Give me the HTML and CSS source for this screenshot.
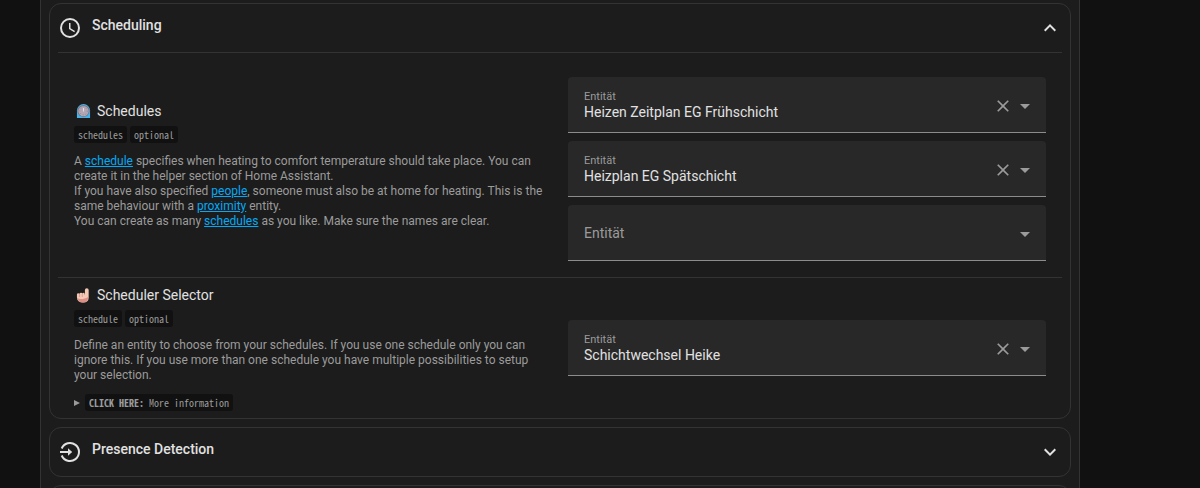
FILE: index.html
```html
<!DOCTYPE html>
<html lang="de">
<head>
  <meta charset="utf-8">
  <title>Blueprint</title>
  <meta name="viewport" content="width=device-width, initial-scale=1.0">
  <link rel="stylesheet" href="styles.css">
</head>
<body>
  <main class="page">

    <!-- Scheduling -->
    <section class="panel">
      <button class="panel-header" type="button" aria-expanded="true">
        <svg class="icon" viewBox="0 0 24 24"><path d="M12 20a8 8 0 1 0 0-16 8 8 0 0 0 0 16m0-18a10 10 0 1 1 0 20 10 10 0 0 1 0-20m.5 5v5.25l4.5 2.67-.75 1.23L11 13V7z"/></svg>
        <span class="panel-title">Scheduling</span>
        <svg class="icon" viewBox="0 0 24 24"><path d="M7.41 15.41 12 10.83l4.59 4.58L18 14l-6-6-6 6z"/></svg>
      </button>

      <div class="panel-body">
        <div class="row row-tall">
          <div class="info">
            <h2>
              <svg class="emoji" viewBox="0 0 16 16"><path fill="#42b4ee" d="M1 15V7a7 7 0 0 1 14 0v8z"/><circle cx="8" cy="7.500" r="6.500" fill="#7d7683"/><circle cx="8" cy="7.500" r="5.500" fill="#b3a7b5"/><circle cx="8" cy="7.500" r="4" fill="none" stroke="#8d8291" stroke-dasharray="1 2"/><path stroke="#e6dfe8" d="M8 4v4"/></svg>
              Schedules
            </h2>
            <div class="tags"><code>schedules</code><code>optional</code></div>
            <p>A <a href="#">schedule</a> specifies when heating to comfort temperature should take place. You can create it in the helper section of Home Assistant.<br>
            If you have also specified <a href="#">people</a>, someone must also be at home for heating. This is the same behaviour with a <a href="#">proximity</a> entity.<br>
            You can create as many <a href="#">schedules</a> as you like. Make sure the names are clear.</p>
          </div>
          <div class="fields">
            <div class="field">
              <div class="field-text">
                <label for="plan1">Entität</label>
                <input id="plan1" type="text" value="Heizen Zeitplan EG Frühschicht">
              </div>
              <button type="button" aria-label="Clear"><svg class="clear" viewBox="0 0 24 24"><path d="M19 6.41 17.59 5 12 10.59 6.41 5 5 6.41 10.59 12 5 17.59 6.41 19 12 13.41 17.59 19 19 17.59 13.41 12z"/></svg></button>
              <button type="button" aria-label="Open"><svg class="arrow" viewBox="0 0 24 24"><path d="m7 10 5 5 5-5z"/></svg></button>
            </div>
            <div class="field">
              <div class="field-text">
                <label for="plan2">Entität</label>
                <input id="plan2" type="text" value="Heizplan EG Spätschicht">
              </div>
              <button type="button" aria-label="Clear"><svg class="clear" viewBox="0 0 24 24"><path d="M19 6.41 17.59 5 12 10.59 6.41 5 5 6.41 10.59 12 5 17.59 6.41 19 12 13.41 17.59 19 19 17.59 13.41 12z"/></svg></button>
              <button type="button" aria-label="Open"><svg class="arrow" viewBox="0 0 24 24"><path d="m7 10 5 5 5-5z"/></svg></button>
            </div>
            <div class="field">
              <div class="field-text">
                <input id="plan3" type="text" placeholder="Entität" aria-label="Entität">
              </div>
              <button type="button" aria-label="Open"><svg class="arrow" viewBox="0 0 24 24"><path d="m7 10 5 5 5-5z"/></svg></button>
            </div>
          </div>
        </div>

        <div class="row">
          <div class="info">
            <h2>
              <svg class="emoji" viewBox="0 0 16 16"><path fill="#f3c9b5" d="M9.500 8V2q0-1.700 2-1.700t2 1.700v8q0 5.500-6 5.500T1 10V7q0-1.500 1.500-1.500.9 0 1.200.6.500-1.100 1.700-1.100 1 0 1.400.9.500-.9 1.400-.9 1.300 0 1.300 3"/><path fill="#de8f86" d="M1.200 11q2.800 1.200 6 .6 3-.6 6-2.100-.2 6-5.700 6-5.300 0-6.300-4.500"/><path stroke="#d89b8a" fill="none" d="M3.800 6.500v3M6.700 6.500v3"/></svg>
              Scheduler Selector
            </h2>
            <div class="tags"><code>schedule</code><code>optional</code></div>
            <p>Define an entity to choose from your schedules. If you use one schedule only you can ignore this. If you use more than one schedule you have multiple possibilities to setup your selection.</p>
            <details>
              <summary><code><b>CLICK HERE:</b> More information</code></summary>
            </details>
          </div>
          <div class="fields">
            <div class="field">
              <div class="field-text">
                <label for="selector">Entität</label>
                <input id="selector" type="text" value="Schichtwechsel Heike">
              </div>
              <button type="button" aria-label="Clear"><svg class="clear" viewBox="0 0 24 24"><path d="M19 6.41 17.59 5 12 10.59 6.41 5 5 6.41 10.59 12 5 17.59 6.41 19 12 13.41 17.59 19 19 17.59 13.41 12z"/></svg></button>
              <button type="button" aria-label="Open"><svg class="arrow" viewBox="0 0 24 24"><path d="m7 10 5 5 5-5z"/></svg></button>
            </div>
          </div>
        </div>
      </div>
    </section>

    <!-- Presence -->
    <section class="panel">
      <button class="panel-header" type="button" aria-expanded="false">
        <svg class="icon" viewBox="0 0 24 24"><path d="M10 8.200v2.800H2v2h8v2.800l4.200-3.800z"/><path fill="none" stroke="#e1e1e1" stroke-width="2" d="M3.700 8.500a9 9 0 1 1 0 7"/></svg>
        <span class="panel-title">Presence Detection</span>
        <svg class="icon" viewBox="0 0 24 24"><path d="M7.41 8.590 12 13.170l4.590-4.580L18 10l-6 6-6-6z"/></svg>
      </button>
    </section>

    <section class="panel panel-empty"></section>
  </main>
</body>
</html>
```
FILE: styles.css
```css
* {
  box-sizing: border-box;
}
html {
  overflow: hidden;
}
body {
  margin: 0;
  background: #111111;
  color: #e1e1e1;
  font-family: Roboto, sans-serif;
  font-size: 14px;
}
.page {
  display: flex;
  flex-direction: column;
  gap: 8px;
  min-height: 100vh;
  margin: 0 120px 0 40px;
  padding: 3px 8px;
  background: #1c1c1c;
  border: 1px solid #333333;
  border-width: 0 1px;
}
button {
  padding: 0;
  border: none;
  background: none;
  color: inherit;
  font-family: inherit;
  cursor: pointer;
}
svg {
  display: block;
  fill: currentColor;
}

/* panels */
.panel {
  padding: 0 8px;
  border: 1px solid #333333;
  border-radius: 12px;
}
.panel-empty {
  min-height: 50px;
}
.panel-header {
  display: flex;
  align-items: center;
  gap: 10px;
  width: 100%;
  height: 48px;
}
.icon {
  width: 24px;
  height: 24px;
}
.panel-title {
  flex: 1;
  padding-bottom: 6px;
  font-size: 14px;
  font-weight: 500;
  line-height: 20px;
  text-align: left;
}

/* rows */
.row {
  display: grid;
  grid-template-columns: 1fr 1fr;
  gap: 16px;
  align-items: center;
  padding: 7px 16px;
  border-top: 1px solid #333333;
}
.row-tall {
  padding: 24px 16px 16px;
}
.row-tall .info {
  padding-bottom: 8px;
}
h2 {
  display: flex;
  align-items: center;
  gap: 6px;
  margin: 0;
  font-size: 14px;
  font-weight: 400;
  line-height: 20px;
}
.emoji {
  width: 15px;
  height: 15px;
  margin-left: 2px;
}
.tags {
  display: flex;
  gap: 3px;
  margin-top: 5px;
}
code {
  padding: 0 4px;
  border-radius: 3px;
  background: #111111;
  color: #9b9b9b;
  font-family: "Noto Sans Mono CJK SC", "DejaVu Sans Mono", monospace;
  font-size: 10px;
  line-height: 17px;
}
p {
  margin: 11px 0 0;
  color: #9b9b9b;
  font-size: 12px;
  line-height: 15px;
}
a {
  color: #03a9f4;
}
details {
  margin-top: 11px;
}
summary {
  display: flex;
  align-items: center;
  gap: 5px;
  color: #9b9b9b;
  cursor: pointer;
}
summary::before {
  content: "";
  border: 3px solid transparent;
  border-left: 6px solid #9b9b9b;
  border-right: none;
}

/* entity pickers */
.fields {
  display: flex;
  flex-direction: column;
  gap: 8px;
}
.field {
  display: flex;
  align-items: center;
  height: 56px;
  padding: 0 9px 0 16px;
  border-bottom: 1px solid #8c8c8c;
  border-radius: 4px 4px 0 0;
  background: #282828;
  color: #9b9b9b;
}
.field button {
  padding-top: 3px;
}
.field-text {
  display: flex;
  flex: 1;
  flex-direction: column;
}
label {
  font-size: 11px;
  line-height: 15px;
}
input {
  width: 100%;
  height: 16px;
  padding: 0;
  border: none;
  outline: none;
  background: none;
  color: #e1e1e1;
  font-family: inherit;
  font-size: 14px;
}
input::placeholder {
  color: #9b9b9b;
}
.clear {
  width: 20px;
  height: 20px;
}
.arrow {
  width: 24px;
  height: 24px;
}
```
